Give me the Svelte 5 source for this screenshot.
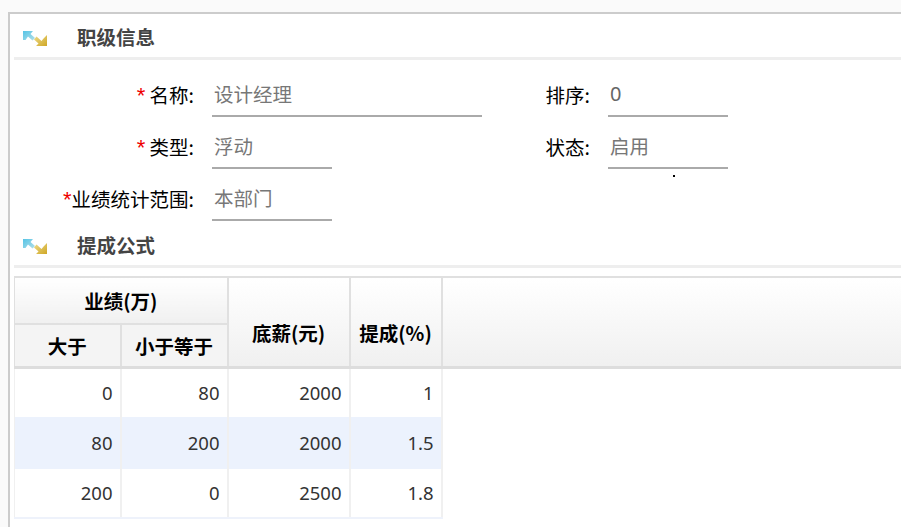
<script>
  const rows = [
    { min: 0, max: 80, base: 2000, rate: '1' },
    { min: 80, max: 200, base: 2000, rate: '1.5', active: true },
    { min: 200, max: 0, base: 2500, rate: '1.8' }
  ];
</script>

{#snippet sectionTitle(text)}
  <div class="section-title">
    <svg class="section-icon" width="24" height="16" viewBox="0 0 24 16">
      <defs>
        <linearGradient id="cyan" x1="0" y1="0" x2="1" y2="1">
          <stop offset="0" stop-color="#55c4e6" />
          <stop offset="1" stop-color="#b4dfe8" />
        </linearGradient>
        <linearGradient id="gold" x1="0" y1="0" x2="1" y2="1">
          <stop offset="0" stop-color="#eedc8c" />
          <stop offset="1" stop-color="#cfa726" />
        </linearGradient>
      </defs>
      <path d="M0 1h10L7.500 4 12 8l-2.500 2.500L5 6.500 2.500 10H0z" fill="url(#cyan)" />
      <path d="M24 16H13l2.500-2.500-4.500-4 2.500-3 5 4.500L21 8l3-3z" fill="url(#gold)" />
    </svg>
    <span>{text}</span>
  </div>
{/snippet}

<div class="panel">
  {@render sectionTitle('职级信息')}

  <div class="form">
    <div class="form-row">
      <div class="field">
        <span class="label"><i>*</i> 名称:</span>
        <div class="input wide">设计经理</div>
      </div>
      <div class="field second">
        <span class="label">排序:</span>
        <div class="input num">0</div>
      </div>
    </div>
    <div class="form-row">
      <div class="field">
        <span class="label"><i>*</i> 类型:</span>
        <div class="input">浮动</div>
      </div>
      <div class="field second">
        <span class="label">状态:</span>
        <div class="input">启用</div>
      </div>
    </div>
    <div class="form-row">
      <div class="field">
        <span class="label"><i>*</i>业绩统计范围:</span>
        <div class="input">本部门</div>
      </div>
    </div>
  </div>

  {@render sectionTitle('提成公式')}

  <table>
    <colgroup>
      <col style="width: 106px" />
      <col style="width: 107px" />
      <col style="width: 122px" />
      <col style="width: 92px" />
      <col />
    </colgroup>
    <thead>
      <tr class="top">
        <th colspan="2">业绩(万)</th>
        <th rowspan="2" class="tall">底薪(元)</th>
        <th rowspan="2" class="tall">提成(%)</th>
        <th rowspan="2" class="filler"></th>
      </tr>
      <tr class="sub">
        <th>大于</th>
        <th>小于等于</th>
      </tr>
    </thead>
    <tbody>
      {#each rows as row}
        <tr class:active={row.active}>
          <td>{row.min}</td>
          <td>{row.max}</td>
          <td>{row.base}</td>
          <td>{row.rate}</td>
        </tr>
      {/each}
    </tbody>
  </table>

  <span class="speck"></span>
</div>

<style>
  :global(body) {
    background: #fafafa;
    overflow: hidden;
    font-family: "Noto Sans CJK SC", "Noto Sans", sans-serif;
  }

  .panel {
    position: relative;
    margin: 12px 0 0 8px;
    height: 515px;
    padding-left: 4px;
    border-top: 2px solid #ccc;
    border-left: 2px solid #ccc;
    background: #fff;
    overflow: hidden;
  }

  .section-title {
    display: flex;
    align-items: center;
    box-sizing: border-box;
    height: 46px;
    padding-top: 3px;
    border-bottom: 3px solid #eee;
    font-size: 19.5px;
    line-height: 1;
    font-weight: 700;
    color: #444;
  }

  .section-icon {
    margin: 2px 30px 0 9px;
  }

  .form {
    height: 162px;
    padding-top: 10px;
    box-sizing: border-box;
  }

  .form-row {
    display: grid;
    grid-template-columns: 516px auto;
    height: 52px;
  }

  .field {
    display: flex;
    align-items: flex-start;
    color: #000;
    font-size: 19.5px;
  }

  .label {
    width: 180px;
    text-align: right;
    line-height: 50px;
    margin-right: 18px;
  }

  .second .label {
    width: 60px;
    margin-right: 18px;
  }

  .label i {
    font-style: normal;
    color: #e00;
    font-size: 22px;
    font-family: "Liberation Sans", sans-serif;
  }

  .input {
    width: 120px;
    height: 47px;
    box-sizing: border-box;
    padding-left: 2px;
    line-height: 48px;
    border-bottom: 2px solid #aaa;
    color: #777;
  }

  .wide {
    width: 270px;
  }

  .num {
    padding-left: 2px;
    font-family: "Noto Sans", sans-serif;
    font-size: 20px;
    color: #666;
  }

  table {
    width: 887px;
    margin-top: 8px;
    border-collapse: collapse;
    table-layout: fixed;
    font-family: "Noto Sans", sans-serif;
    font-size: 18.5px;
  }

  th {
    padding: 0;
    border: 2px solid #e0e0e0;
    background: linear-gradient(#fff, #f0f0f0);
    color: #000;
    font-family: "Noto Sans CJK SC", "Noto Sans", sans-serif;
    font-weight: 700;
    font-size: 19.5px;
  }

  .tall {
    padding-top: 20px;
  }

  .top th[colspan] {
    height: 45px;
  }

  .sub th {
    height: 41px;
    background: #f4f4f4;
  }

  thead {
    border-bottom: 3px solid #ddd;
  }

  .filler {
    border-right: 0;
  }

  td {
    height: 46px;
    padding: 0 7px 2px 0;
    border-left: 2px solid #f0f0f0;
    border-right: 2px solid #f0f0f0;
    text-align: right;
    color: #333;
  }

  tr > :first-child {
    border-left-width: 1px;
  }

  tbody tr:last-child td {
    border-bottom: 2px solid #eef2fb;
  }

  .active td {
    height: 50px;
    background: #ecf2fd;
  }

  .speck {
    position: absolute;
    left: 663px;
    top: 161px;
    width: 2px;
    height: 2px;
    background: #000;
  }
</style>
